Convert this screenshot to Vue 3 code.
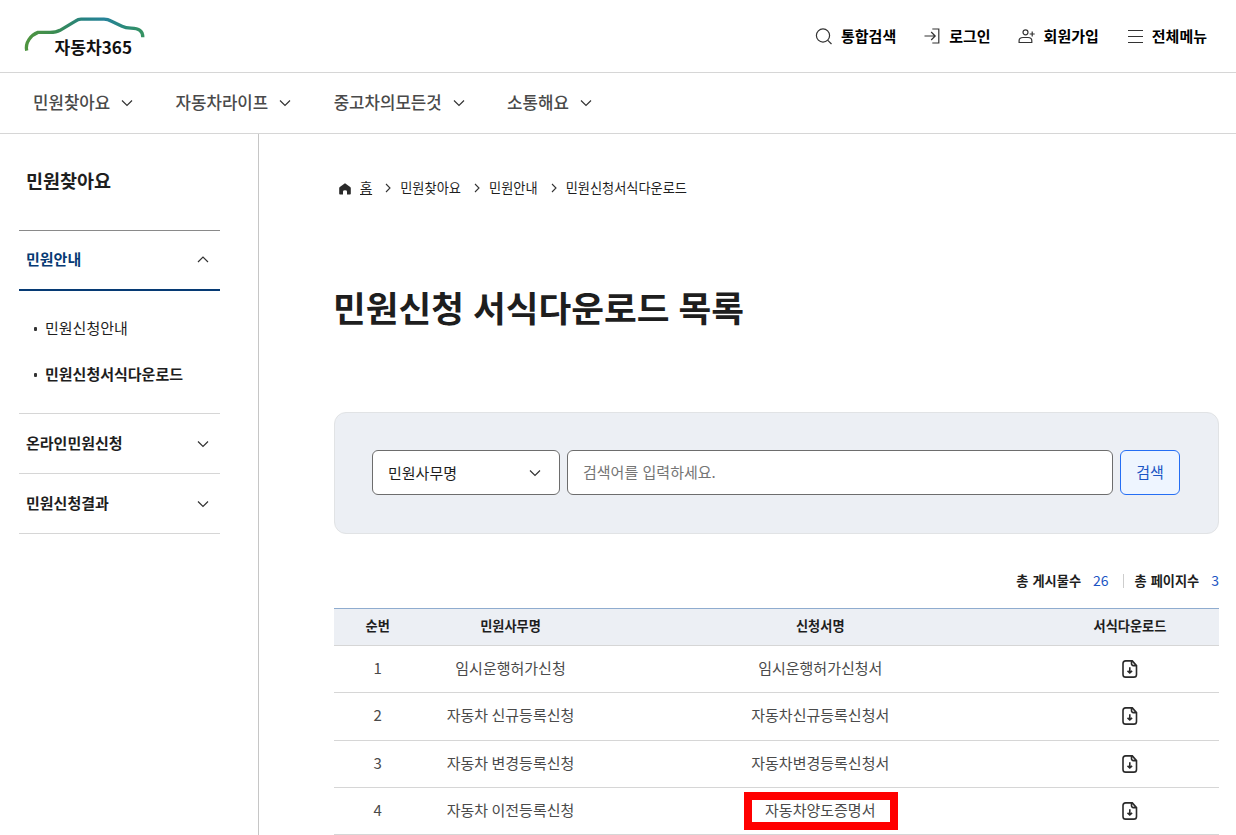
<template>
  <div class="page">
    <header class="header">
      <a class="logo" href="#">
        <svg width="126" height="44" viewBox="0 0 126 44">
          <defs>
            <linearGradient id="car" x1="0" y1="0" x2="1" y2="0">
              <stop offset="0" stop-color="#4f9440" />
              <stop offset="0.25" stop-color="#3a8c52" />
              <stop offset="0.5" stop-color="#258283" />
              <stop offset="0.68" stop-color="#27839a" />
              <stop offset="0.85" stop-color="#2a8a78" />
              <stop offset="1" stop-color="#359262" />
            </linearGradient>
          </defs>
          <path
            d="M4.700 36.700C3 28.500 9 21 16 18.400H28C32.500 18.400 35 18 38 16.300L53 7.300C55 6 57 5.200 59 5.200H82C85 5.200 87 5.800 89 7L100 12.200C103 13.600 105 13.900 109 14.100C117 14.500 120.800 16.500 120.800 23.300"
            fill="none"
            stroke="url(#car)"
            stroke-width="3.300"
          />
          <text x="32.500" y="39.500" textLength="77.500" lengthAdjust="spacingAndGlyphs">자동차365</text>
        </svg>
      </a>
      <ul class="util">
        <li class="search">
          <svg width="18" height="18" viewBox="0 0 18 18">
            <circle cx="8" cy="8.500" r="6.600" />
            <path d="M12.800 13.300L16.500 17" />
          </svg>
          통합검색
        </li>
        <li class="login">
          <svg width="18" height="18" viewBox="0 0 18 18">
            <path d="M1.500 9H12M8.200 5L12.200 9L8.200 13M9.300 2H15.800V16H9.300" />
          </svg>
          로그인
        </li>
        <li class="join">
          <svg width="18" height="18" viewBox="0 0 18 18">
            <circle cx="7.500" cy="5.300" r="2.500" />
            <path d="M1.100 15.500V13.600C1.100 11.500 3 10.500 5 10.500H10C12 10.500 13.800 11.500 13.800 13.600V15.500ZM14.200 4.500V9.500M11.700 7H16.700" />
          </svg>
          회원가입
        </li>
        <li class="all">
          <svg width="18" height="18" viewBox="0 0 18 18">
            <path d="M2 3.500H17M2 9.500H17M2 15.500H17" />
          </svg>
          전체메뉴
        </li>
      </ul>
    </header>

    <nav class="gnb">
      <a v-for="menu in menus" :key="menu" href="#">
        <span>{{ menu }}</span>
        <svg width="12" height="8" viewBox="0 0 12 8"><path d="M1 1.500L6 6.500L11 1.500" /></svg>
      </a>
    </nav>

    <div class="body">
      <aside class="side">
        <h2>민원찾아요</h2>
        <div class="group open">
          <span>민원안내</span>
          <svg width="12" height="8" viewBox="0 0 12 8"><path d="M1 6L6 1L11 6" /></svg>
        </div>
        <ul class="sub">
          <li>민원신청안내</li>
          <li class="on">민원신청서식다운로드</li>
        </ul>
        <div v-for="name in closedGroups" :key="name" class="group">
          <span>{{ name }}</span>
          <svg width="12" height="8" viewBox="0 0 12 8"><path d="M1 1.500L6 6.500L11 1.500" /></svg>
        </div>
      </aside>

      <main class="main">
        <div class="crumbs">
          <svg class="home" width="12" height="12" viewBox="0 0 12 12">
            <path d="M6 0.300L11.200 4.100Q11.800 4.600 11.800 5.300V10.800Q11.800 11.600 11 11.600H8V8.600Q8 7.300 6 7.300T4 8.600V11.600H1Q0.200 11.600 0.200 10.800V5.300Q0.200 4.600 0.800 4.100Z" />
          </svg>
          <a href="#">홈</a>
          <template v-for="crumb in crumbs" :key="crumb">
            <svg class="sep" width="6" height="10" viewBox="0 0 6 10"><path d="M1 1L5 5L1 9" /></svg>
            <span>{{ crumb }}</span>
          </template>
        </div>

        <h1>민원신청 서식다운로드 목록</h1>

        <form class="search-box" @submit.prevent>
          <button type="button" class="select">
            민원사무명
            <svg width="12" height="8" viewBox="0 0 12 8"><path d="M1 1.500L6 6.500L11 1.500" /></svg>
          </button>
          <input v-model="keyword" placeholder="검색어를 입력하세요." />
          <button type="submit" class="submit">검색</button>
        </form>

        <div class="totals">
          <b>총 게시물수</b><span>26</span>
          <i></i>
          <b>총 페이지수</b><span>3</span>
        </div>

        <div class="table">
          <div class="row head">
            <span>순번</span>
            <span>민원사무명</span>
            <span>신청서명</span>
            <span>서식다운로드</span>
          </div>
          <div v-for="(row, index) in rows" :key="index" class="row">
            <span>{{ index + 1 }}</span>
            <span>{{ row.task }}</span>
            <span :class="{ marked: row.marked }">{{ row.form }}</span>
            <span class="file">
              <svg width="16" height="18" viewBox="0 0 16 18">
                <path d="M9.500 0.900H3.700Q1 0.900 1 3.600V14.400Q1 17.100 3.700 17.100H11.800Q14.500 17.100 14.500 14.400V5.600L10.300 0.900H9.500V3.600Q9.500 5.600 11.500 5.600H14.500" />
                <path class="arrow" d="M7.800 7.200V12.700M5.500 10.800L7.800 12.900L10.100 10.800" />
              </svg>
            </span>
          </div>
        </div>
      </main>
    </div>
  </div>
</template>

<script setup>
import { ref } from 'vue'

const keyword = ref('')

const menus = ['민원찾아요', '자동차라이프', '중고차의모든것', '소통해요']
const closedGroups = ['온라인민원신청', '민원신청결과']
const crumbs = ['민원찾아요', '민원안내', '민원신청서식다운로드']

const rows = [
  { task: '임시운행허가신청', form: '임시운행허가신청서' },
  { task: '자동차 신규등록신청', form: '자동차신규등록신청서' },
  { task: '자동차 변경등록신청', form: '자동차변경등록신청서' },
  { task: '자동차 이전등록신청', form: '자동차양도증명서', marked: true }
]
</script>

<style>
body {
  overflow: hidden;
}
</style>

<style scoped>
.page {
  height: 835px;
  overflow: hidden;
  display: flex;
  flex-direction: column;
  background: #fff;
  color: #1e1e1e;
  font-family: "Noto Sans CJK KR", sans-serif;
  font-size: 15px;
  line-height: 22px;
}
.page * {
  box-sizing: border-box;
}
a {
  color: inherit;
  text-decoration: none;
}
ul {
  list-style: none;
  margin: 0;
  padding: 0;
}
svg {
  flex: none;
  fill: none;
  stroke: #333;
  stroke-width: 1.2;
}
.header {
  flex: none;
  height: 73px;
  border-bottom: 1px solid #d6d6d6;
  display: flex;
  justify-content: space-between;
  padding: 14px 29px 0 22px;
}
.logo {
  display: flex;
}
.logo text {
  fill: #111;
  stroke: none;
  font-size: 16.500px;
  font-weight: 700;
}
.util {
  display: flex;
  height: 44px;
  align-items: center;
  gap: 27px;
  font-weight: 700;
  color: #000;
}
.util li {
  display: flex;
  align-items: center;
  gap: 8px;
}
.gnb {
  flex: none;
  height: 61px;
  border-bottom: 1px solid #d6d6d6;
  display: flex;
  align-items: center;
  gap: 42.400px;
  padding-left: 33px;
  font-size: 16.800px;
  font-weight: 500;
  color: #4a4a4a;
}
.gnb a {
  display: flex;
  align-items: center;
  gap: 11px;
}
.gnb span,
.group span {
  padding-bottom: 2px;
}
.body {
  flex: 1;
  display: flex;
}
.side {
  width: 259px;
  border-right: 1px solid #c6c6c6;
  padding: 33px 38px 0 19px;
}
.side h2 {
  margin: 0 0 36px;
  padding-left: 7px;
  font-size: 18.500px;
  line-height: 27px;
  font-weight: 700;
}
.group {
  height: 60px;
  padding: 0 11px 0 7px;
  display: flex;
  align-items: center;
  justify-content: space-between;
  font-weight: 700;
  border-bottom: 1px solid #d6d6d6;
}
.group.open {
  height: 61px;
  color: #063a74;
  border-top: 1px solid #8a8a8a;
  border-bottom: 2px solid #063a74;
}
.sub {
  height: 123px;
  padding: 26px 0 0 15px;
  border-bottom: 1px solid #d6d6d6;
}
.sub li {
  display: flex;
  align-items: center;
  gap: 8px;
  margin-bottom: 24px;
}
.sub li::before {
  content: "";
  width: 3px;
  height: 4px;
  margin-top: 1px;
  border-radius: 1px;
  background: #333;
}
.sub .on {
  font-weight: 700;
}
.main {
  width: 885px;
  margin-left: 75px;
}
.crumbs {
  display: flex;
  align-items: center;
  height: 20px;
  margin-top: 44px;
  padding-left: 5px;
  font-size: 13.200px;
}
.crumbs a {
  margin-left: 9px;
  text-decoration: underline;
}
.home {
  margin-top: 2px;
  fill: #2a2a2a;
  stroke: none;
}
.sep {
  margin: 0 9px 0 13.100px;
  stroke-width: 1.1;
}
h1 {
  margin: 83px 0 79px -1px;
  font-size: 35.600px;
  line-height: 52px;
  font-weight: 700;
  word-spacing: 1px;
}
.search-box {
  height: 122px;
  display: flex;
  gap: 7px;
  padding: 37px 38px 0 37px;
  background: #eceff4;
  border: 1px solid #e1e3e5;
  border-radius: 12px;
}
.search-box button,
.search-box input {
  height: 45px;
  border: 1px solid #6d6d6d;
  border-radius: 6px;
  background: #fff;
  font: inherit;
  color: #1e1e1e;
}
.search-box .select {
  width: 188px;
  padding: 0 18px 0 15px;
  display: flex;
  align-items: center;
  justify-content: space-between;
}
.search-box input {
  flex: 1;
  padding: 0 15px 2px;
  word-spacing: 1px;
}
.search-box input::placeholder {
  color: #757575;
}
.search-box .submit {
  width: 60px;
  padding: 0 0 2px;
  color: #1b55c4;
  background: #eef5ff;
  border-color: #256ef4;
}
.totals {
  display: flex;
  align-items: center;
  justify-content: flex-end;
  height: 20px;
  margin: 37px 0 17px;
  font-size: 13.200px;
  word-spacing: 1px;
}
.totals span {
  margin-left: 12px;
  padding-bottom: 2px;
  font-size: 14px;
  color: #1b55c4;
}
.totals i {
  width: 1px;
  height: 14px;
  margin: 0 11px 0 14px;
  background: #cdcdcd;
}
.table {
  border-top: 1px solid #8faccf;
}
.row {
  display: grid;
  grid-template-columns: 10% 20% 50% 20%;
  align-items: center;
  justify-items: center;
  height: 47.250px;
  border-bottom: 1px solid #d6d6d6;
  color: #4a4a4a;
}
.row span {
  padding: 0 1px 2px 0;
}
.row.head {
  height: 37px;
  background: #eceff4;
  color: #1e1e1e;
  font-size: 13.200px;
  font-weight: 700;
}
.row .file {
  display: flex;
  padding-bottom: 0;
}
.file svg {
  stroke: #2a2a2a;
  stroke-width: 1.6;
}
.marked {
  position: relative;
}
/* red frame laid over the highlighted cell */
.marked::after {
  content: "";
  position: absolute;
  inset: -7px -22px -7px -21px;
  border: 8px solid #f00;
}
</style>
